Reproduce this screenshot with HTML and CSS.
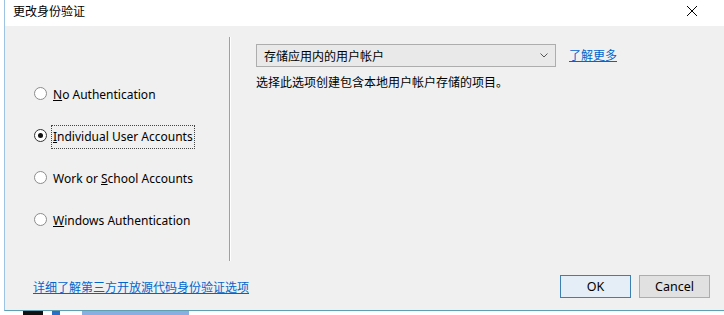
FILE: index.html
```html
<!DOCTYPE html>
<html>
<head>
<meta charset="utf-8">
<title>更改身份验证</title>
<link rel="stylesheet" href="styles.css">
</head>
<body>
<div class="dialog">
	<div class="titlebar">
		<span class="title">更改身份验证</span>
		<svg class="close" width="12" height="12" viewBox="0 0 12 12"><path d="M1 1L11 11M11 1L1 11" stroke="#000" stroke-width="1" fill="none"/></svg>
	</div>
	<div class="content">
		<div class="main">
			<div class="options">
				<div class="opt"><span class="radio"></span><span class="lbl"><u>N</u>o Authentication</span></div>
				<div class="opt"><span class="radio on"></span><span class="lbl focus"><u>I</u>ndividual User Accounts</span></div>
				<div class="opt"><span class="radio"></span><span class="lbl">Work or <u>S</u>chool Accounts</span></div>
				<div class="opt"><span class="radio"></span><span class="lbl"><u>W</u>indows Authentication</span></div>
			</div>
			<div class="detail">
				<div class="row">
					<div class="combo">
						<span>存储应用内的用户帐户</span>
						<svg width="8" height="5" viewBox="0 0 8 5"><path d="M0.5 0.5L4 4L7.5 0.5" stroke="#555" stroke-width="1" fill="none"/></svg>
					</div>
					<a class="link more" href="#">了解更多</a>
				</div>
				<p class="desc">选择此选项创建包含本地用户帐户存储的项目。</p>
			</div>
		</div>
		<div class="footer">
			<a class="link" href="#">详细了解第三方开放源代码身份验证选项</a>
			<div class="buttons">
				<button class="btn default">OK</button>
				<button class="btn">Cancel</button>
			</div>
		</div>
	</div>
</div>
<div class="under">
	<span class="blk"></span><span class="blu"></span><span class="txt"></span>
</div>
</body>
</html>
```

FILE: styles.css
```css
html,body{
	margin:0;
	height:100%;
}
body{
	overflow:hidden;
	background:#fff;
	font-family:"Noto Sans","Noto Sans CJK SC",sans-serif;
	font-size:12px;
	color:#000;
}
.dialog{
	margin-left:4px;
	border-left:1px solid #9cc3e2;
	border-bottom:1px solid #5d9fb3;
	height:310px;
	display:flex;
	flex-direction:column;
}
.titlebar{
	height:26px;
	background:#fff;
	display:flex;
	align-items:center;
	justify-content:space-between;
	padding:0 26px 0 8px;
}
.title{
	font-family:"Noto Sans CJK SC",sans-serif;
	font-size:12px;
	margin-top:-5px;
}
.close{
	margin-top:-4px;
}
.content{
	flex:1;
	background:#f0f0f0;
	display:flex;
	flex-direction:column;
}
.main{
	display:flex;
	margin-top:11px;
	height:224px;
}
.options{
	width:224px;
	border-right:1px solid #a0a0a0;
	box-shadow:1px 0 0 #fff;
	padding-top:46px;
	display:flex;
	flex-direction:column;
	gap:18px;
}
.opt{
	height:24px;
	display:flex;
	align-items:center;
	padding-left:29px;
}
.radio{
	width:11px;
	height:11px;
	border:1px solid #8c8c8c;
	border-radius:50%;
	background:#fff;
	position:relative;
	margin-right:4px;
	margin-top:-4px;
}
.radio.on{
	border-color:#333;
}
.radio.on:after{
	content:'';
	position:absolute;
	left:3px;
	top:3px;
	width:5px;
	height:5px;
	border-radius:50%;
	background:#111;
}
.lbl{
	font-size:12px;
	line-height:22px;
	padding:0 1px;
	border:1px dotted transparent;
}
.lbl.focus{
	border-color:#444;
}
.detail{
	padding-left:26px;
	padding-top:7px;
}
.row{
	display:flex;
	align-items:center;
}
.combo{
	width:284px;
	height:21px;
	border:1px solid #adadad;
	background:#e9e9e9;
	display:flex;
	align-items:center;
	justify-content:space-between;
	padding:0 7px;
	font-family:"Noto Sans CJK SC",sans-serif;
}
.link{
	color:#0066cc;
	text-decoration:underline;
	font-family:"Noto Sans CJK SC",sans-serif;
	font-size:12px;
}
.more{
	margin-left:13px;
	margin-top:-3px;
}
.desc{
	margin:6px 0 0;
	font-family:"Noto Sans CJK SC",sans-serif;
}
.footer{
	display:flex;
	justify-content:space-between;
	align-items:center;
	padding:14px 14px 0 28px;
}
.buttons{
	display:flex;
	gap:8px;
}
.btn{
	width:71px;
	height:23px;
	border:1px solid #adadad;
	background:#e1e1e1;
	font-family:"Noto Sans",sans-serif;
	font-size:12.5px;
	padding:0;
}
.btn.default{
	border-color:#3c7fb1;
	background:#e5eef6;
}
.under{
	height:4px;
	display:flex;
	align-items:stretch;
	padding-left:23px;
}
.blk{
	width:20px;
	background:#111;
}
.blu{
	width:8px;
	margin-left:9px;
	background:#2b6fc4;
}
.txt{
	width:107px;
	margin-left:22px;
	background:#8aaee0;
}
```
